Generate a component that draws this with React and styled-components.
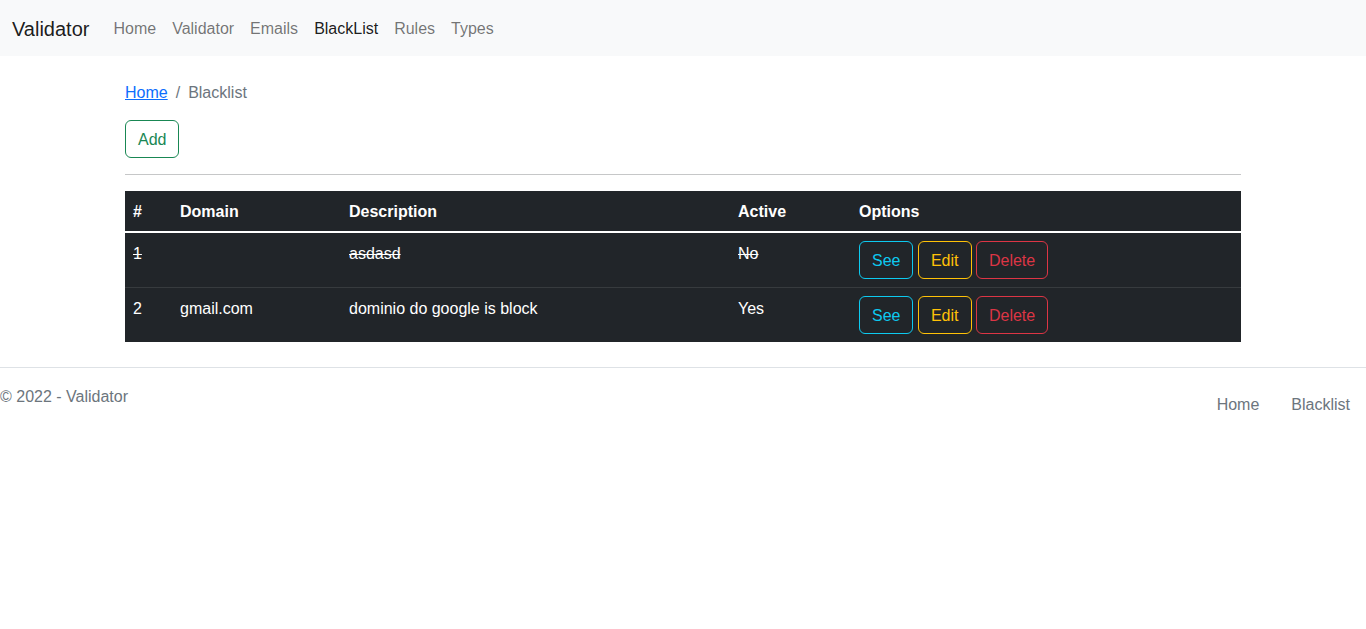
import styled, { createGlobalStyle } from "styled-components";

const GlobalStyle = createGlobalStyle`
  * {
    box-sizing: border-box;
  }
  body {
    margin: 0;
    font-family: "Liberation Sans", Arial, sans-serif;
    font-size: 16px;
    line-height: 1.5;
    color: #212529;
    background: #fff;
  }
`;

const palette = {
  muted: "#6c757d",
  navLink: "rgba(0, 0, 0, 0.55)",
  navActive: "rgba(0, 0, 0, 0.9)",
  dark: "#212529",
  info: "#0dcaf0",
  warning: "#ffc107",
  danger: "#dc3545",
  success: "#198754",
  primary: "#0d6efd",
};

const NavBar = styled.nav`
  height: 56px;
  background: #f8f9fa;
  display: flex;
  align-items: center;
  padding: 2px 12px 0;
`;

const Brand = styled.a`
  font-size: 20px;
  color: ${palette.navActive};
  text-decoration: none;
  margin-right: 16px;
  padding: 5px 0;
`;

const NavList = styled.div`
  display: flex;
  align-items: center;
`;

const NavLink = styled.a`
  padding: 8px;
  color: ${(p) => (p.$active ? palette.navActive : palette.navLink)};
  text-decoration: none;
`;

const Main = styled.main`
  width: 1140px;
  margin: 0 auto;
  padding: 25px 12px 9px;
`;

const Breadcrumb = styled.ol`
  list-style: none;
  margin: 0 0 15px;
  padding: 0;
  display: flex;
  color: ${palette.muted};

  li + li::before {
    content: "/";
    padding: 0 8px;
    color: ${palette.muted};
  }
  a {
    color: ${palette.primary};
    text-decoration: underline;
  }
`;

const OutlineButton = styled.button`
  font-family: inherit;
  font-size: 16px;
  line-height: 1.5;
  padding: 7px 12px 5px;
  border-radius: 6px;
  border: 1px solid ${(p) => p.$color};
  color: ${(p) => p.$color};
  background: transparent;
  cursor: pointer;
  vertical-align: top;
`;

const Rule = styled.hr`
  border: 0;
  border-top: 1px solid #c6c7c8;
  margin: 16px 0;
`;

const Table = styled.table`
  width: 100%;
  border-collapse: collapse;
  background: ${palette.dark};
  color: #fff;
  margin-bottom: 16px;

  th {
    text-align: left;
    font-weight: bold;
    padding: 9px 8px 7px;
    vertical-align: bottom;
  }
  tbody {
    border-top: 2px solid #fff;
  }
  td {
    padding: 9px 8px 7px;
    vertical-align: top;
    border-bottom: 1px solid #373b3e;
  }
  td.options {
    padding: 8px;
  }
  tbody tr:last-child td {
    border-bottom: 0;
  }
`;

const Row = styled.tr`
  td.txt {
    text-decoration: ${(p) => (p.$inactive ? "line-through" : "none")};
  }
`;

const Options = styled.div`
  white-space: nowrap;
  line-height: 1;
`;

const Footer = styled.footer`
  border-top: 1px solid #dee2e6;
  padding-top: 17px;
  display: flex;
  justify-content: space-between;
  align-items: flex-start;
  color: ${palette.muted};
`;

const FooterLinks = styled.div`
  display: flex;
  a {
    padding: 8px 16px;
    color: ${palette.muted};
    text-decoration: none;
  }
`;

const rows = [
  { id: 1, domain: "", description: "asdasd", active: false },
  { id: 2, domain: "gmail.com", description: "dominio do google is block", active: true },
];

export default function App() {
  return (
    <>
      <GlobalStyle />
      <NavBar>
        <Brand href="#">Validator</Brand>
        <NavList>
          <NavLink href="#">Home</NavLink>
          <NavLink href="#">Validator</NavLink>
          <NavLink href="#">Emails</NavLink>
          <NavLink href="#" $active>BlackList</NavLink>
          <NavLink href="#">Rules</NavLink>
          <NavLink href="#">Types</NavLink>
        </NavList>
      </NavBar>
      <Main>
        <Breadcrumb>
          <li><a href="#">Home</a></li>
          <li>Blacklist</li>
        </Breadcrumb>
        <OutlineButton $color={palette.success}>Add</OutlineButton>
        <Rule />
        <Table>
          <thead>
            <tr>
              <th style={{ width: 47 }}>#</th>
              <th style={{ width: 169 }}>Domain</th>
              <th style={{ width: 389 }}>Description</th>
              <th style={{ width: 121 }}>Active</th>
              <th>Options</th>
            </tr>
          </thead>
          <tbody>
            {rows.map((r) => (
              <Row key={r.id} $inactive={!r.active}>
                <td className="txt">{r.id}</td>
                <td className="txt">{r.domain}</td>
                <td className="txt">{r.description}</td>
                <td className="txt">{r.active ? "Yes" : "No"}</td>
                <td className="options">
                  <Options>
                    <OutlineButton $color={palette.info}>See</OutlineButton>{" "}
                    <OutlineButton $color={palette.warning}>Edit</OutlineButton>{" "}
                    <OutlineButton $color={palette.danger}>Delete</OutlineButton>
                  </Options>
                </td>
              </Row>
            ))}
          </tbody>
        </Table>
      </Main>
      <Footer>
        <span>© 2022 - Validator</span>
        <FooterLinks>
          <a href="#">Home</a>
          <a href="#">Blacklist</a>
        </FooterLinks>
      </Footer>
    </>
  );
}
